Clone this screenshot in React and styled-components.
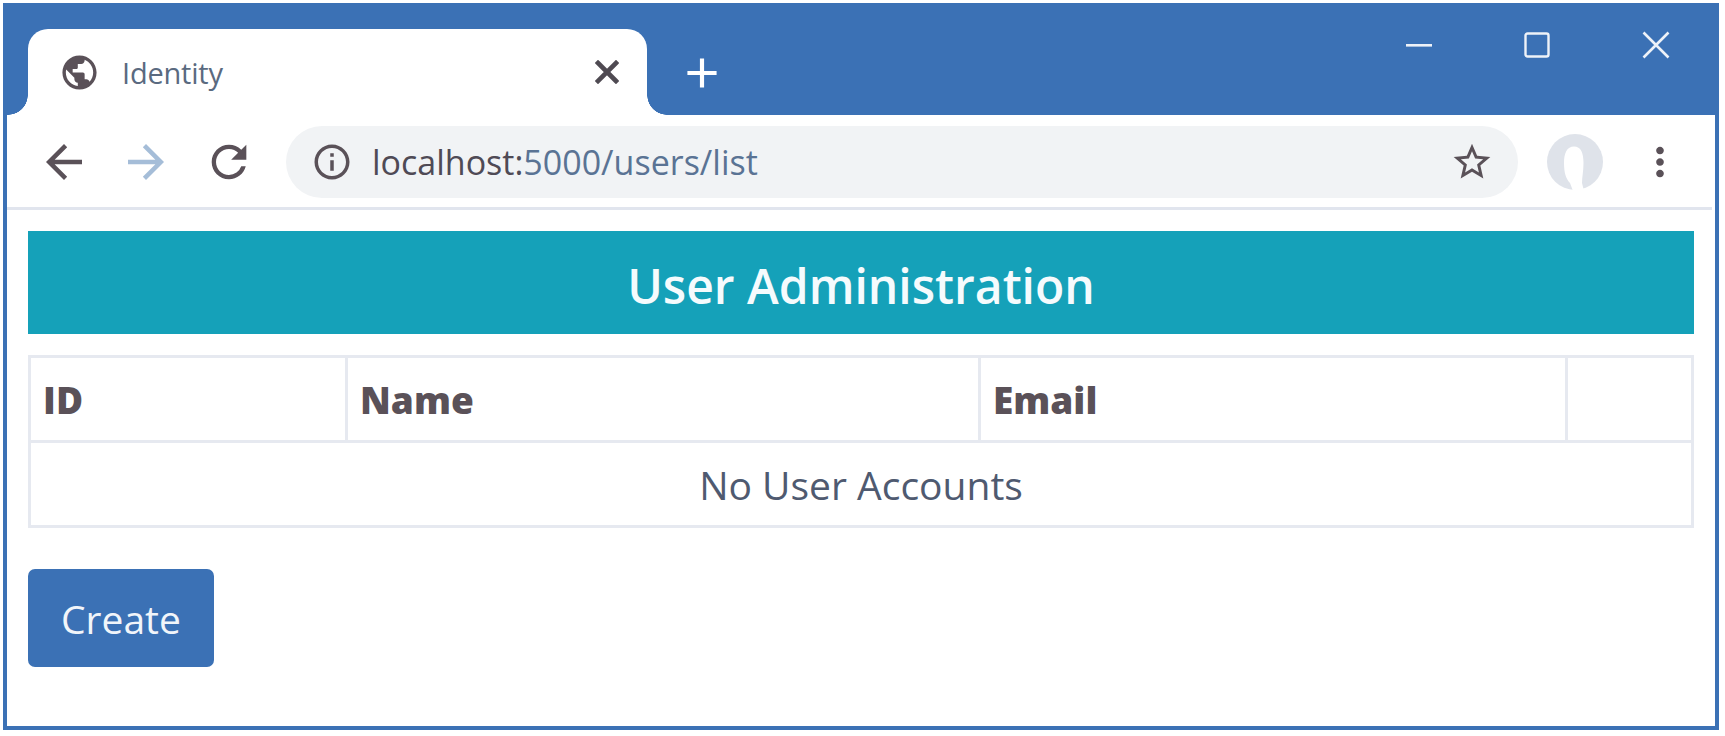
import React from "react";
import styled, { createGlobalStyle } from "styled-components";
import { MdPublic, MdArrowBack, MdArrowForward, MdRefresh, MdInfoOutline, MdStarBorder, MdMoreVert, MdAdd } from "react-icons/md";

const Global = createGlobalStyle`
  html, body { margin: 0; padding: 0; background: #fff; }
  body { font-family: "Open Sans", "Noto Sans", sans-serif; overflow: hidden; }
`;
const Page = styled.div`
  width: 1725px; height: 736px; box-sizing: border-box;
  padding: 3px 6px 6px 3px; background: #fff;
`;
const Win = styled.div`
  height: 100%; box-sizing: border-box; display: flex; flex-direction: column;
  border: 4px solid #3b71b5; border-top: 0; background: #fff;
`;
const TabStrip = styled.div`
  height: 112px; flex: none; background: #3b71b5; display: flex; box-sizing: border-box;
  padding: 26px 0 0 25px; margin: 0 -4px; align-items: flex-start;
`;
const Tab = styled.div`
  position: relative; width: 619px; height: 86px; box-sizing: border-box; background: #fff;
  border-radius: 20px 20px 0 0; display: flex; align-items: center; padding: 0 28px 0 31px;
  &::before, &::after {
    content: ""; position: absolute; bottom: 0; width: 20px; height: 20px;
    background: radial-gradient(circle at var(--cx) 0, #3b71b5 19.5px, #fff 20px);
  }
  &::before { left: -20px; --cx: 0; }
  &::after { right: -20px; --cx: 100%; }
`;
const TabTitle = styled.span`
  font-size: 29px; color: #5a6a80; margin-left: 22px; flex: 1; letter-spacing: -0.2px;
`;
const NewTab = styled.div`
  margin-left: 30px; margin-top: 19px; color: #fff; display: flex;
`;
const Controls = styled.div`
  margin-left: auto; display: flex; align-items: center; gap: 92px; margin-top: 2px; padding-right: 49px; color: #eef2f8;
`;
const Toolbar = styled.div`
  height: 95px; flex: none; box-sizing: border-box; display: flex; align-items: center;
  border-bottom: 3px solid #e1e5ee; padding: 2px 0 0 30px; margin-right: 3px;
`;
const NavButton = styled.div`
  display: flex; color: ${p => p.$faded ? "#a5bdd8" : "#5a5158"}; margin-right: ${p => p.$gap}px;
`;
const Omnibox = styled.div`
  width: 1232px; height: 72px; box-sizing: border-box; border-radius: 36px; background: #f1f3f5;
  display: flex; align-items: center; padding: 0 24px 0 25px; color: #5a5158;
`;
const Url = styled.div`
  font-size: 34px; margin-left: 19px; flex: 1; color: #5a7394;
  b { font-weight: 400; color: #4f4a55; }
`;
const Avatar = styled.div`
  display: flex; margin-left: 28px;
`;
const Menu = styled.div`
  display: flex; margin-left: 33px; color: #5a5158;
`;
const Content = styled.div`
  flex: 1; padding: 21px 21px 0 21px; display: flex; flex-direction: column;
`;
const Banner = styled.div`
  height: 103px; box-sizing: border-box; padding-top: 6px; background: #15a1b9; color: #f5fbfd; display: flex; align-items: center; justify-content: center;
  font-size: 48px; font-weight: 600; margin-bottom: 21px;
`;
const Table = styled.table`
  width: 100%; table-layout: fixed; border-collapse: collapse; color: #5a5158;
`;
const Th = styled.th`
  height: 85px; box-sizing: border-box; border: 3px solid #e6e9f0; text-align: left; padding: 0 12px;
  font-size: 37px; font-weight: 800; color: #5a5158; width: ${p => p.$w}px;
`;
const Td = styled.td`
  height: 85px; box-sizing: border-box; border: 3px solid #e6e9f0; text-align: center;
  font-size: 39px; color: #4f5a70;
`;
const CreateButton = styled.button`
  margin-top: 41px; align-self: flex-start; width: 186px; height: 98px; border: 0; border-radius: 7px;
  background: #3b71b5; color: #f1f5fa; font: 400 39px "Open Sans", sans-serif;
`;

const Rect = () => (
  <svg width="26" height="26" viewBox="0 0 26 26"><rect x="1.5" y="1.5" width="23" height="23" rx="2" fill="none" stroke="currentColor" strokeWidth="2.4" /></svg>
);
const Dash = () => (
  <svg width="26" height="26" viewBox="0 0 26 26"><rect y="12" width="26" height="2.6" fill="currentColor" /></svg>
);
const Cross = () => (
  <svg width="28" height="28" viewBox="0 0 28 28"><path d="M1.5 1.5 26.5 26.5M26.5 1.5 1.5 26.5" stroke="currentColor" strokeWidth="2.6" fill="none" /></svg>
);
const TabClose = () => (
  <svg width="24" height="24" viewBox="0 0 24 24"><path d="M3 3 21 21M21 3 3 21" stroke="#4f4a52" strokeWidth="4.6" strokeLinecap="square" fill="none" /></svg>
);
const Profile = () => (
  <svg width="58" height="58" viewBox="0 0 58 58">
    <circle cx="29" cy="29" r="28" fill="#dfe3ea" />
    <path d="M18 30C18 20 21 13.500 28 13.500S37.500 20 37.500 30C37.500 38 36 44 36 50L38 58H27L24 50C20 46 18 40 18 30z" fill="#fff" />
  </svg>
);

export default function App() {
  return (
    <Page>
      <Global />
      <Win>
        <TabStrip>
          <Tab>
            <MdPublic size={41} color="#5a5158" />
            <TabTitle>Identity</TabTitle>
            <TabClose />
          </Tab>
          <NewTab><MdAdd size={50} /></NewTab>
          <Controls><Dash /><Rect /><Cross /></Controls>
        </TabStrip>
        <Toolbar>
          <NavButton $gap={28}><MdArrowBack size={54} /></NavButton>
          <NavButton $faded $gap={30}><MdArrowForward size={54} /></NavButton>
          <NavButton $gap={31}><MdRefresh size={52} /></NavButton>
          <Omnibox>
            <MdInfoOutline size={42} />
            <Url><b>localhost:</b>5000/users/list</Url>
            <MdStarBorder size={44} />
          </Omnibox>
          <Avatar><Profile /></Avatar>
          <Menu><MdMoreVert size={46} /></Menu>
        </Toolbar>
        <Content>
          <Banner>User Administration</Banner>
          <Table>
            <thead>
              <tr>
                <Th $w={317}>ID</Th>
                <Th $w={633}>Name</Th>
                <Th $w={587}>Email</Th>
                <Th />
              </tr>
            </thead>
            <tbody>
              <tr><Td colSpan={4}>No User Accounts</Td></tr>
            </tbody>
          </Table>
          <CreateButton>Create</CreateButton>
        </Content>
      </Win>
    </Page>
  );
}
